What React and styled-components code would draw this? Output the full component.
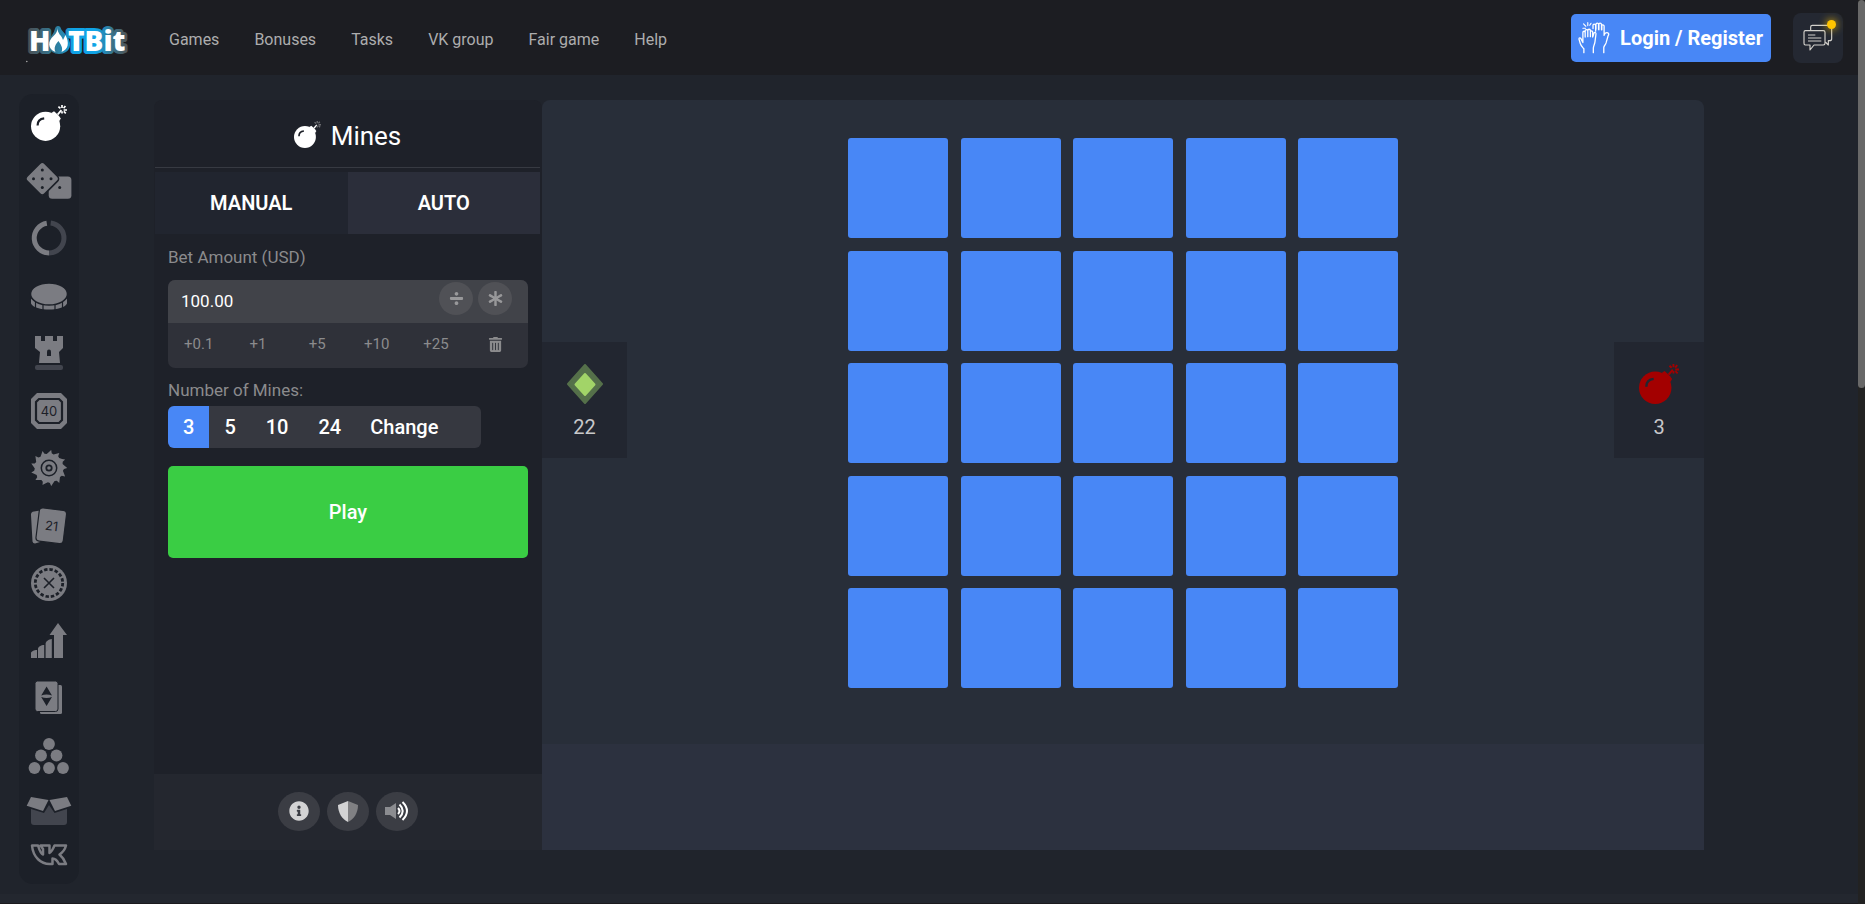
import React, { useState } from "react";
import styled, { createGlobalStyle } from "styled-components";
import { FaAsterisk, FaDivide, FaInfoCircle, FaTrashAlt } from "react-icons/fa";

const DARK = "#1c2028";
const GREY = "#7b7c82";
const DIM = "#42454e";

const Bomb = ({ size = 36, color = "#fff", spark = color, shine = DARK }) => (
  <svg width={size} height={size} viewBox="0 0 36 36" fill="none">
    <circle cx="14.6" cy="21.3" r="14.6" fill={color} />
    <path d="M20.4 8l2.6-1.8 2 1.8 3 3 1.8 2.4-1.8 3z" fill={color} />
    <path d="M6.6 20.4c0-4 2.4-6.6 6.6-7" stroke={shine} strokeWidth="2.2" />
    <path d="M26.6 9.6l3.8-4.4" stroke={color} strokeWidth="1.8" />
    <path
      d="M31 0v3M27.4 1.6l2 1.8M34.4 1l-1.8 2.2M32.6 5h3.4M32.8 6.4l2 2M31 6.2v2.4"
      stroke={spark}
      strokeWidth="1.7"
    />
  </svg>
);

const Icon = ({ children, height = 36 }) => (
  <svg width="48" height={height} viewBox={`0 0 48 ${height}`} fill={GREY}>
    {children}
  </svg>
);

const sawPoints = Array.from({ length: 13 }, (_, i) => {
  const at = (angle, r) =>
    `${(24 + Math.cos(angle) * r).toFixed(1)},${(
      18 +
      Math.sin(angle) * r
    ).toFixed(1)}`;
  const a = (i * Math.PI * 2) / 13;
  return `${at(a, 18.2)} ${at(a + 0.06, 15)} ${at(a + 0.2, 14.2)} ${at(a + 0.36, 16)}`;
}).join(" ");

const DiceIcon = () => (
  <Icon>
    <rect x="23.7" y="13.5" width="22.7" height="22.3" rx="3.5" />
    <rect
      x="4.8"
      y="3.2"
      width="25"
      height="25"
      rx="3.5"
      transform="rotate(45 17.3 15.7)"
      stroke={DARK}
      strokeWidth="1.6"
    />
    <g fill={DARK}>
      <circle cx="17.3" cy="7" r="1.5" />
      <circle cx="8.5" cy="15.7" r="1.5" />
      <circle cx="17.3" cy="15.7" r="1.5" />
      <circle cx="26" cy="15.7" r="1.5" />
      <circle cx="17.3" cy="24.5" r="1.5" />
      <circle cx="34.7" cy="24.5" r="1.5" />
    </g>
  </Icon>
);

const WheelIcon = () => (
  <Icon>
    <g fill="none" strokeWidth="5">
      <path d="M24 33a15 15 0 0 0 1.7-29.9" stroke={DIM} />
      <path d="M24 33a15 15 0 0 1-2.2-29.8" stroke={GREY} />
    </g>
  </Icon>
);

const CoinIcon = () => (
  <Icon>
    <path d="M6 20c3 6 33 6 36 0v5.5c-4 8-32 8-36 0z" />
    <path
      d="M10.5 22v9M18 24v9M30 24v9M37.5 22v9"
      stroke={DARK}
      strokeWidth="1.2"
    />
    <ellipse cx="24" cy="16" rx="18.5" ry="11" stroke={DARK} strokeWidth="1.5" />
  </Icon>
);

const TowerIcon = () => (
  <Icon>
    <path d="M10 1h6v5h4V1h8v5h4V1h6v12l-4 4 1 11H14l1-11-5-4z" />
    <path d="M22 21v-4.5a2 2 0 0 1 4 0V21z" fill={DARK} />
    <rect x="10" y="30" width="28" height="5" rx="2" fill={DIM} />
  </Icon>
);

const KenoIcon = () => (
  <Icon>
    <path d="M12 0h24l6 6v24l-6 6H12l-6-6V6z" />
    <path d="M14 6h20l3 3v18l-3 3H14l-3-3V9z" stroke={DARK} strokeWidth="2.2" />
    <IconText x="24" y="22.5">
      40
    </IconText>
  </Icon>
);

const SawIcon = () => (
  <Icon>
    <polygon points={sawPoints} />
    <g fill="none" stroke={DARK}>
      <circle cx="24" cy="18" r="7.7" strokeWidth="1.5" />
      <circle cx="24" cy="18" r="2.7" strokeWidth="1.8" />
    </g>
  </Icon>
);

const CardsIcon = () => (
  <Icon>
    <path d="M9 3.5l6-1V34l-5 1.5a2.5 2.5 0 0 1-2.5-2L6 7a3 3 0 0 1 3-3.500z" />
    <g transform="rotate(7 26 18)">
      <rect
        x="12.5"
        y="1"
        width="27.5"
        height="33.5"
        rx="3.5"
        stroke={DARK}
        strokeWidth="1.2"
      />
      <IconText x="26.5" y="22.5">
        21
      </IconText>
    </g>
  </Icon>
);

const ChipIcon = () => (
  <Icon>
    <circle cx="24" cy="18" r="18" />
    <g fill="none" stroke={DARK}>
      <circle
        cx="24"
        cy="18"
        r="13.7"
        strokeWidth="2.8"
        strokeDasharray="3.4 1.98"
      />
      <path d="M19 13l10 10M29 13L19 23" strokeWidth="1.6" />
    </g>
  </Icon>
);

const CrashIcon = () => (
  <Icon>
    <path d="M6 35v-5c0-1.5 3-3 6-3v8zM13 35V26c0-2 3-4 6.2-4v13zM20.6 35V21c0-2.5 3-4.8 6.2-5v19z" />
    <path d="M29 35V12h-4.5L33 0l9 12h-4v23z" />
  </Icon>
);

const HiloIcon = () => (
  <Icon>
    <rect x="15" y="5" width="22" height="29" rx="1.5" />
    <rect
      x="10"
      y="1"
      width="23"
      height="30.5"
      rx="2.5"
      stroke={DARK}
      strokeWidth="1"
    />
    <path
      d="M21.6 6.5L27 15.5q-5.4-2-10.8 0zM21.6 26L27 17q-5.4 2-10.8 0z"
      fill={DARK}
    />
  </Icon>
);

const PlinkoIcon = () => (
  <Icon>
    <circle cx="24" cy="6" r="5.9" />
    <circle cx="16" cy="17.5" r="5.9" />
    <circle cx="31.5" cy="17.5" r="5.9" />
    <circle cx="9.5" cy="30" r="5.9" />
    <circle cx="24" cy="30" r="5.9" />
    <circle cx="38" cy="30" r="5.9" />
  </Icon>
);

const BoxIcon = () => (
  <Icon>
    <path d="M6 14l13 4 5-8 5.5 8L42 14v13a3 3 0 0 1-3 3H9a3 3 0 0 1-3-3z" fill={DIM} />
    <path d="M6 2l17.5 3L18 16 1.7 10.7zM42 2L24.5 5 30 16l16.3-5.3z" />
  </Icon>
);

const VkIcon = () => (
  <Icon height={22}>
    <path
      d="M7 1.5h6c1.500 5 3 8.500 5 9V5l-2.500-3.500h9v7.500c2-1 3.500-4 5-7.500H41c-1 4-3.500 7-6.500 9 3 2.500 5 5.500 6.500 9.500h-7c-1.500-3-4-5.500-6.500-5.500v5.500h-2C16 20.500 8 13 7 1.500z"
      fill="none"
      stroke={GREY}
      strokeWidth="2.5"
      strokeLinejoin="round"
    />
  </Icon>
);

const HandsIcon = () => (
  <svg width="33" height="32" viewBox="112 64 99 98" fill="none" stroke="#fff">
    <g strokeWidth="4" strokeLinecap="round" strokeLinejoin="round">
      <path d="M132 158v-12c-4-5-9-9-11-16l-4-14c0-4 4-5 6-1l6 12V96c0-5 7-5 7 0v14-19c0-5 8-5 8 0v18-19c0-5 8-5 8 0v19-14c0-5 7-5 7 0v15l4-12c2-4 7-2 6 3l-3 24c-1 8-5 13-5 20v13" />
      <path d="M160 84V74c0-5 7-5 8 0v18M169 86V71c0-5 8-5 8 0v16M178 88V71c0-5 7-5 8 0v17M187 88V76c0-5 6-4 7 0v29c2-6 6-10 11-8 5 2 3 6 1 10l-6 21c-2 6-6 9-7 14v16" />
      <path d="M131 70l7 7M144 66v9M129 83h8M154 68l-4 6" strokeWidth="3.5" />
    </g>
  </svg>
);

const ChatIcon = () => (
  <svg width="30" height="28" viewBox="791 74 90 84" fill="none" stroke="#d2d0cb">
    <g strokeWidth="3.5" strokeLinejoin="round">
      <path d="M798 94h54q5 0 5 5v33q0 5-5 5h-28l-12 15v-15h-14q-4 0-4-5V99q0-5 4-5z" />
      <path d="M814 92v-9q0-5 5-5h52q6 0 6 6v34q0 6-6 6h-4v13l-9-9" />
      <path d="M806 107h22M806 116h40M806 125h40" />
    </g>
  </svg>
);

const ShieldIcon = () => (
  <svg width="20" height="21" viewBox="0 0 20 21">
    <path d="M10 0v21C4 18 0 12 0 4z" fill="#d3d3d4" />
    <path d="M10 0v21c6-3 10-9 10-17z" fill="#808083" />
  </svg>
);

const SoundIcon = () => (
  <svg width="24" height="20" viewBox="0 0 24 20" fill="none">
    <path d="M0 6h5l6-4v16l-6-4H0z" fill="#8b8c90" />
    <path
      d="M13 7q3 3 0 6M14.5 3.5q6.5 6.5 0 13M17.5 1q9 9 0 18"
      stroke="#fff"
      strokeWidth="2"
    />
  </svg>
);

const GemIcon = () => (
  <svg width="36" height="40" viewBox="0 0 36 40" strokeLinejoin="round" strokeWidth="2">
    <path d="M18 1l17 19-17 19L1 20z" fill="#55704a" stroke="#55704a" />
    <path d="M18 10l9.5 10.5L18 31 8.5 20.5z" fill="#a2d468" stroke="#a2d468" />
  </svg>
);

const LogoIcon = () => (
  <svg width="104" height="48" viewBox="0 -6 104 48">
    <defs>
      <linearGradient id="glow" gradientUnits="userSpaceOnUse" x1="2" y1="0" x2="102" y2="0">
        <stop offset="0" stopColor="#4c4f52" />
        <stop offset="0.35" stopColor="#2788b0" />
        <stop offset="0.45" stopColor="#0fa3e6" />
        <stop offset="0.68" stopColor="#0fa3e6" />
        <stop offset="0.85" stopColor="#3a7186" />
        <stop offset="1" stopColor="#505254" />
      </linearGradient>
    </defs>
    <path
      d="M32 5c1 5 10 9 9 16-1 8-15 8-16 0 0-6 6-9 7-16z"
      fill="url(#glow)"
      stroke="url(#glow)"
      strokeWidth="6"
      strokeLinejoin="round"
    />
    <LogoText x="3" y="27">
      H
    </LogoText>
    <LogoText x="42" y="27">
      TBit
    </LogoText>
    <g fill="#fff">
      <path d="M31.500 4c0 6 4 7 5.500 12l2.500-5c4 8 3 14-4 17 2-4-1-8-3-11-3 3-5 7-3 11-8-3-8-11-2-16 3-3 4-5 4-8z" />
      <circle cx="0.8" cy="37.5" r="0.8" fill="#aaa" />
    </g>
  </svg>
);

const games = [
  ["Mines", Bomb],
  ["Dice", DiceIcon],
  ["Wheel", WheelIcon],
  ["Coinflip", CoinIcon],
  ["Tower", TowerIcon],
  ["Keno", KenoIcon],
  ["Saw", SawIcon],
  ["Blackjack", CardsIcon],
  ["Roulette", ChipIcon],
  ["Crash", CrashIcon],
  ["Hilo", HiloIcon],
  ["Plinko", PlinkoIcon],
  ["Boxes", BoxIcon],
];

const links = ["Games", "Bonuses", "Tasks", "VK group", "Fair game", "Help"];
const steps = [0.1, 1, 5, 10, 25];
const mineCounts = [3, 5, 10, 24];

const App = () => {
  const [bet, setBet] = useState("100.00");
  const [mines, setMines] = useState(3);
  const [mode, setMode] = useState("MANUAL");

  const changeBet = (value) => setBet(value.toFixed(2));

  return (
    <Shell>
      <GlobalStyle />
      <Page>
        <Header>
          <Logo href="#" aria-label="HotBit">
            <LogoIcon />
          </Logo>
          <Nav>
            {links.map((link) => (
              <NavLink key={link} href="#">
                {link}
              </NavLink>
            ))}
          </Nav>
          <LoginButton>
            <HandsIcon />
            Login / Register
          </LoginButton>
          <ChatButton aria-label="Chat">
            <ChatIcon />
            <Badge />
          </ChatButton>
        </Header>

        <Body>
          <Sidebar>
            <GameList>
              {games.map(([name, GameIcon]) => (
                <GameLink key={name} href="#" aria-label={name}>
                  <GameIcon />
                </GameLink>
              ))}
            </GameList>
            <GameLink href="#" aria-label="VK">
              <VkIcon />
            </GameLink>
          </Sidebar>

          <Game>
            <Panel>
              <Title>
                <Bomb size={27} spark="#6b6c70" />
                Mines
              </Title>
              <Tabs>
                {["MANUAL", "AUTO"].map((tab) => (
                  <Tab
                    key={tab}
                    $active={tab === mode}
                    onClick={() => setMode(tab)}
                  >
                    {tab}
                  </Tab>
                ))}
              </Tabs>
              <Form>
                <Label htmlFor="bet">Bet Amount (USD)</Label>
                <BetBox>
                  <BetRow>
                    <BetInput
                      id="bet"
                      value={bet}
                      onChange={(e) => setBet(e.target.value)}
                    />
                    <RoundButton
                      aria-label="Half"
                      onClick={() => changeBet(Number(bet) / 2)}
                    >
                      <FaDivide />
                    </RoundButton>
                    <RoundButton
                      aria-label="Double"
                      onClick={() => changeBet(Number(bet) * 2)}
                    >
                      <FaAsterisk />
                    </RoundButton>
                  </BetRow>
                  <Steps>
                    {steps.map((step) => (
                      <Step
                        key={step}
                        onClick={() => changeBet(Number(bet) + step)}
                      >
                        +{step}
                      </Step>
                    ))}
                    <Step aria-label="Clear" onClick={() => changeBet(0)}>
                      <FaTrashAlt />
                    </Step>
                  </Steps>
                </BetBox>
                <MinesLabel>Number of Mines:</MinesLabel>
                <MinesRow>
                  {mineCounts.map((count) => (
                    <MinesButton
                      key={count}
                      $active={count === mines}
                      onClick={() => setMines(count)}
                    >
                      {count}
                    </MinesButton>
                  ))}
                  <ChangeButton>Change</ChangeButton>
                </MinesRow>
                <PlayButton>Play</PlayButton>
              </Form>
              <PanelFooter>
                <FooterButton aria-label="Info">
                  <FaInfoCircle size={20} />
                </FooterButton>
                <FooterButton aria-label="Fairness">
                  <ShieldIcon />
                </FooterButton>
                <FooterButton aria-label="Sound">
                  <SoundIcon />
                </FooterButton>
              </PanelFooter>
            </Panel>

            <Board>
              <Field>
                <Counter>
                  <GemIcon />
                  {25 - mines}
                </Counter>
                <Tiles>
                  {Array.from({ length: 25 }, (_, i) => (
                    <Tile key={i} aria-label={`Tile ${i + 1}`} />
                  ))}
                </Tiles>
                <Counter $right>
                  <Bomb size={40} color="#a30000" shine="#222630" />
                  {mines}
                </Counter>
              </Field>
              <BoardFooter />
            </Board>
          </Game>
        </Body>
        <Bottom />
      </Page>
      <ScrollTrack>
        <ScrollThumb />
      </ScrollTrack>
    </Shell>
  );
};

export default App;

const GlobalStyle = createGlobalStyle`
  * {
    box-sizing: border-box;
  }
  body {
    margin: 0;
    background: #20242c;
    font-family: Roboto, "Liberation Sans", sans-serif;
  }
  button, input {
    margin: 0;
    padding: 0;
    border: none;
    background: none;
    color: inherit;
    font: inherit;
  }
  button {
    cursor: pointer;
  }
  svg {
    display: block;
    flex-shrink: 0;
  }
`;

const IconText = styled.text`
  font-family: Inter, sans-serif;
  font-size: 13px;
  font-weight: 400;
  text-anchor: middle;
  fill: ${DARK};
  stroke: none;
`;

const LogoText = styled.text`
  font-family: "Open Sans", sans-serif;
  font-size: 28px;
  font-weight: 800;
  fill: #fff;
  stroke: url(#glow);
  stroke-width: 6px;
  stroke-linejoin: round;
  paint-order: stroke;
`;

const Shell = styled.div`
  display: flex;
  min-height: 100vh;
`;

const Page = styled.div`
  display: flex;
  flex-direction: column;
  flex: 1;
  min-width: 0;
`;

const Header = styled.header`
  display: flex;
  align-items: center;
  height: 75px;
  padding: 0 15px 0 26px;
  background: #1c1d22;
`;

const Logo = styled.a`
  padding-top: 8px;
`;

const Nav = styled.nav`
  display: flex;
  flex: 1;
  gap: 35px;
  margin-left: 39px;
  padding-top: 4px;
`;

const NavLink = styled.a`
  color: #adadae;
  font-size: 16px;
  text-decoration: none;
`;

const LoginButton = styled.button`
  display: flex;
  align-items: center;
  gap: 10px;
  height: 48px;
  padding: 0 8px 0 6px;
  border-radius: 5px;
  background: #4887f6;
  color: #fff;
  font-size: 20px;
  font-weight: 700;
`;

const ChatButton = styled.button`
  position: relative;
  display: flex;
  align-items: center;
  justify-content: center;
  width: 50px;
  height: 50px;
  margin-left: 22px;
  border-radius: 8px;
  background: #242832;
`;

const Badge = styled.span`
  position: absolute;
  top: 7px;
  right: 7px;
  width: 9px;
  height: 9px;
  border-radius: 50%;
  background: #ffc400;
  box-shadow: 0 0 8px #ffc400;
`;

const Body = styled.div`
  display: flex;
  align-items: flex-start;
  gap: 75px;
  padding: 19px 154px 10px 19px;
`;

const Sidebar = styled.aside`
  display: flex;
  flex-direction: column;
  align-items: center;
  gap: 13px;
  width: 60px;
  min-height: 790px;
  padding: 11px 0 18px;
  border-radius: 14px;
  background: ${DARK};
`;

const GameList = styled.div`
  display: flex;
  flex-direction: column;
  flex: 1;
  align-items: center;
  justify-content: space-between;
`;

const GameLink = styled.a`
  display: block;
`;

const Game = styled.main`
  display: flex;
  flex: 1;
  min-width: 0;
  margin-top: 6px;
`;

const Panel = styled.section`
  display: flex;
  flex-direction: column;
  width: 388px;
  border-radius: 8px 8px 0 0;
  background: #1e2129;
`;

const Title = styled.h1`
  display: flex;
  align-items: center;
  justify-content: center;
  gap: 10px;
  height: 68px;
  margin: 0 2px 4px 1px;
  padding-top: 4px;
  border-bottom: 1px solid #373a42;
  color: #fff;
  font-size: 26px;
  font-weight: 400;

  svg {
    margin-bottom: 2px;
  }
`;

const Tabs = styled.div`
  display: grid;
  grid-template-columns: 1fr 1fr;
  margin: 0 2px 0 1px;
`;

const Tab = styled.button`
  height: 62px;
  background: ${({ $active }) => ($active ? "#21252f" : "#2b2e3a")};
  color: #fff;
  font-size: 20px;
  font-weight: 600;
`;

const Form = styled.div`
  display: flex;
  flex-direction: column;
  padding: 12px 14px;
`;

const Label = styled.label`
  color: #8b8b8d;
  font-size: 17px;
  line-height: 22px;
`;

const BetBox = styled.div`
  margin: 12px 0 11px;
  border-radius: 7px;
  overflow: hidden;
  background: #2f3139;
`;

const BetRow = styled.div`
  display: flex;
  gap: 5px;
  height: 43px;
  padding: 2px 16px 0 13px;
  background: #414349;
`;

const BetInput = styled.input`
  flex: 1;
  min-width: 0;
  height: 37px;
  color: #fff;
  font-size: 17px;
  outline: none;
`;

const RoundButton = styled.button`
  display: flex;
  align-items: center;
  justify-content: center;
  width: 34px;
  height: 33px;
  border-radius: 50%;
  background: #505156;
  color: #98989a;
  font-size: 15px;
`;

const Steps = styled.div`
  display: grid;
  grid-template-columns: repeat(6, 1fr);
  height: 45px;
  padding: 0 3px 3px 1px;
`;

const Step = styled.button`
  display: flex;
  align-items: center;
  justify-content: center;
  color: #8b8b8d;
  font-size: 15px;
`;

const MinesLabel = styled(Label).attrs({ as: "div" })`
  margin-bottom: 5px;
`;

const MinesRow = styled.div`
  display: flex;
  align-self: flex-start;
  margin-bottom: 18px;
  border-radius: 6px;
  overflow: hidden;
  background: #363840;
`;

const MinesButton = styled.button`
  height: 42px;
  padding: 0 15px;
  background: ${({ $active }) => ($active ? "#4887f6" : "transparent")};
  color: #fff;
  font-size: 20px;
  font-weight: 500;
`;

const ChangeButton = styled(MinesButton)`
  width: 125px;
  padding: 0 14px;
  text-align: left;
`;

const PlayButton = styled.button`
  height: 92px;
  border-radius: 5px;
  background: #3acd44;
  color: #fff;
  font-size: 20px;
  font-weight: 500;
`;

const PanelFooter = styled.footer`
  display: flex;
  align-items: center;
  justify-content: center;
  gap: 7px;
  height: 76px;
  margin-top: auto;
  padding-bottom: 2px;
  background: #24272f;
`;

const FooterButton = styled.button`
  display: flex;
  align-items: center;
  justify-content: center;
  width: 42px;
  height: 39px;
  border-radius: 50%;
  background: #3b3d44;
  color: #d3d3d4;
`;

const Board = styled.section`
  flex: 1;
  min-width: 0;
  border-radius: 8px 8px 0 0;
  overflow: hidden;
  background: #282e39;
`;

const Field = styled.div`
  display: grid;
  grid-template-columns: 1fr auto 1fr;
  align-items: start;
  padding: 38px 0 56px;
`;

const Counter = styled.div`
  display: flex;
  flex-direction: column;
  align-items: center;
  gap: 11px;
  justify-self: ${({ $right }) => ($right ? "end" : "start")};
  width: ${({ $right }) => ($right ? 90 : 85)}px;
  height: 116px;
  margin-top: 204px;
  padding-top: 22px;
  background: #222630;
  color: #c8c8ca;
  font-size: 20px;
`;

const Tiles = styled.div`
  display: grid;
  grid-template-columns: repeat(5, 100px);
  grid-template-rows: repeat(5, 100px);
  justify-content: space-between;
  align-content: space-between;
  width: 550px;
  height: 550px;
`;

const Tile = styled.button`
  border-radius: 3px;
  background: #4887f6;
`;

const BoardFooter = styled.footer`
  height: 106px;
  background: #2c313f;
`;

const Bottom = styled.div`
  flex: 1;
  min-height: 10px;
  border-bottom: 1px solid #1b1a1e;
  background: #23272f;
`;

const ScrollTrack = styled.div`
  width: 7px;
  background: #222;
`;

const ScrollThumb = styled.div`
  height: 388px;
  border-radius: 4px;
  background: #686868;
`;
